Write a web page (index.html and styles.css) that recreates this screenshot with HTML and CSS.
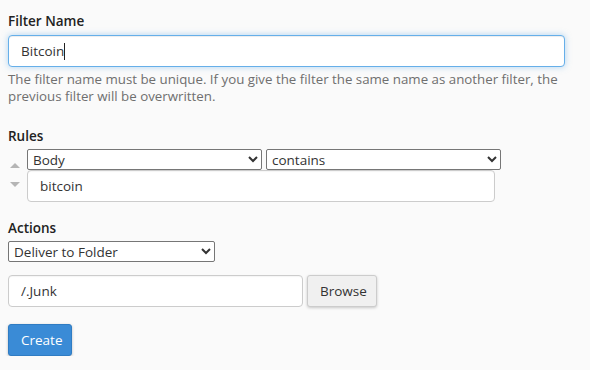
FILE: index.html
```html
<!DOCTYPE html>
<html>
<head>
<meta charset="utf-8">
<link rel="stylesheet" href="styles.css">
</head>
<body>
<form class="filter-form">
  <div class="section">
    <label class="label label-first">Filter Name</label>
    <div class="text-input focused">Bitcoin<span class="caret"></span></div>
    <p class="help">The filter name must be unique. If you give the filter the same name as another filter, the previous filter will be overwritten.</p>
  </div>

  <div class="section rules">
    <label class="label">Rules</label>
    <div class="rule-row">
      <div class="order">
        <span class="arrow up"></span>
        <span class="arrow down"></span>
      </div>
      <div class="rule-fields">
        <div class="select-row">
          <select class="select rule-select"><option>Body</option></select>
          <select class="select rule-select"><option>contains</option></select>
        </div>
        <input class="text-input rule-value" type="text" value="bitcoin">
      </div>
    </div>
  </div>

  <div class="section actions">
    <label class="label">Actions</label>
    <select class="select action-select"><option>Deliver to Folder</option></select>
    <div class="folder-row">
      <input class="text-input folder" type="text" value="/.Junk">
      <button type="button" class="btn btn-default">Browse</button>
    </div>
  </div>

  <button type="button" class="btn btn-primary">Create</button>
</form>
</body>
</html>
```

FILE: styles.css
```css
* { box-sizing: border-box; }

html, body {
  margin: 0;
  background: #fafafa;
}

body {
  padding: 11px 8px 0 8px;
  font-family: "Open Sans", "Liberation Sans", sans-serif;
  font-size: 13px;
  color: #333;
}

.filter-form {
  display: flex;
  flex-direction: column;
  align-items: flex-start;
}

.section {
  display: flex;
  flex-direction: column;
  align-items: flex-start;
  width: 100%;
}

.label {
  display: block;
  font-weight: 600;
  font-size: 13.5px;
  line-height: 20px;
  color: #222;
  margin-bottom: 3px;
}

.label-first { margin-bottom: 4px; }

.text-input {
  display: block;
  height: 32px;
  padding: 0 12px;
  border: 1px solid #ccc;
  border-radius: 4px;
  background: #fff;
  font-family: "Open Sans", "Liberation Sans", sans-serif;
  font-size: 13.5px;
  color: #333;
  line-height: 30px;
  outline: none;
  box-shadow: inset 0 1px 1px rgba(0,0,0,0.04);
}

.focused {
  width: 557px;
  border-color: #66afe9;
  box-shadow: inset 0 1px 1px rgba(0,0,0,0.075), 0 0 6px rgba(102,175,233,0.5);
}

.caret {
  display: inline-block;
  width: 1px;
  height: 17px;
  background: #222;
  vertical-align: -4px;
}

.help {
  margin: 4px 0 0 0;
  font-size: 13.3px;
  line-height: 17px;
  color: #6f6f6f;
  width: 560px;
}

.rules { margin-top: 21px; }

.rule-row {
  display: flex;
  align-items: flex-start;
}

.order {
  width: 19px;
  display: flex;
  flex-direction: column;
  align-items: flex-start;
  padding-top: 14px;
  padding-left: 2px;
  gap: 14px;
}

.arrow {
  width: 0;
  height: 0;
  border-left: 5px solid transparent;
  border-right: 5px solid transparent;
}

.arrow.up { border-bottom: 5px solid #b5b5b5; }
.arrow.down { border-top: 5px solid #b5b5b5; }

.rule-fields {
  display: flex;
  flex-direction: column;
  align-items: flex-start;
}

.select-row {
  display: flex;
  gap: 4px;
  height: 21px;
}

.select {
  display: block;
  height: 21px;
  font-family: "Open Sans", "Liberation Sans", sans-serif;
  font-size: 13.5px;
  color: #333;
  background: #fff;
  border: 1px solid #767676;
  border-radius: 2px;
  padding: 0 0 0 1px;
}

.rule-select { width: 235px; }

.rule-value {
  width: 468px;
}

.actions { margin-top: 16px; }

.action-select { width: 207px; }

.folder-row {
  display: flex;
  gap: 4px;
  margin-top: 13px;
}

.folder { width: 295px; }

.btn {
  height: 32px;
  padding: 0 12px;
  font-family: "Open Sans", "Liberation Sans", sans-serif;
  font-size: 13.5px;
  border-radius: 3px;
  cursor: pointer;
}

.btn-default {
  width: 70px;
  background: #f0f0f0;
  border: 1px solid #ccc;
  color: #333;
  box-shadow: 0 1px 3px rgba(0,0,0,0.2);
}

.btn-primary {
  margin-top: 17px;
  width: 64px;
  background: #3a8bd6;
  border: 1px solid #2f7cc3;
  color: #fff;
  box-shadow: 0 1px 3px rgba(0,0,0,0.25);
}
```
